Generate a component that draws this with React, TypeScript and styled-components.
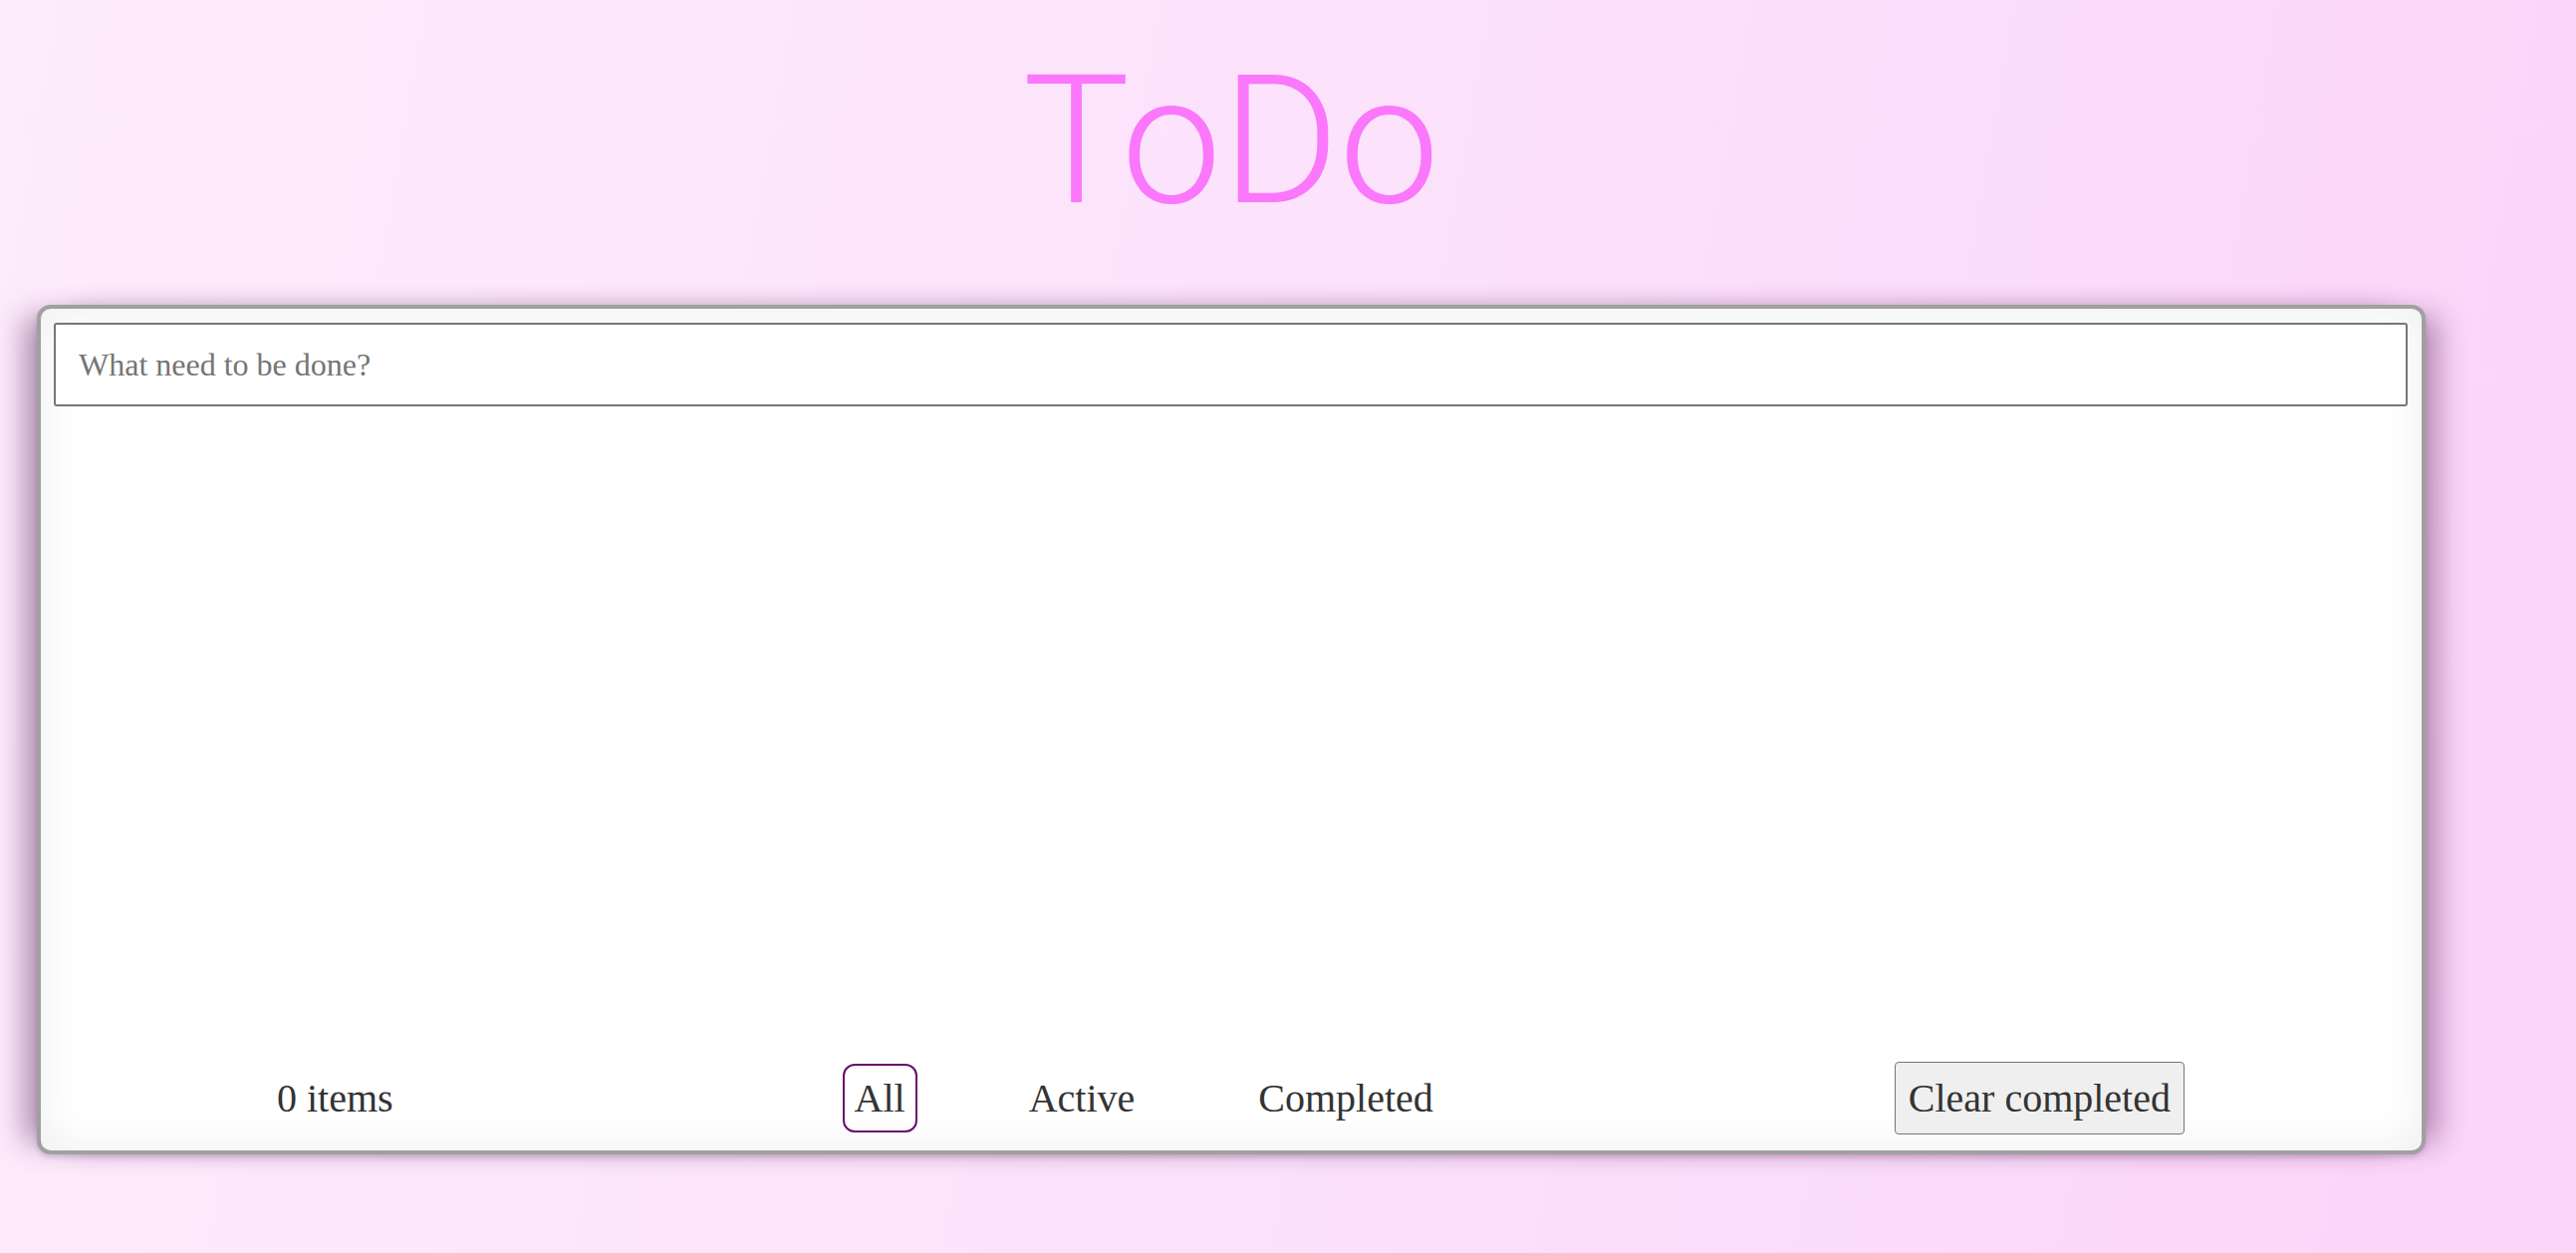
import React, { useState } from "react";
import styled, { createGlobalStyle } from "styled-components";

const GlobalStyle = createGlobalStyle`
  html, body {
    margin: 0;
    padding: 0;
  }
  body {
    min-height: 1258px;
    background: linear-gradient(100deg, #fdecfd 0%, #fce2fb 50%, #fbd4fa 100%);
    font-family: "Liberation Serif", "Times New Roman", serif;
  }
  * { box-sizing: border-box; }
`;

const Page = styled.div`
  padding-left: 37px;
  padding-bottom: 60px;
`;

const Main = styled.main`
  width: 2398px;
`;

const Title = styled.h1`
  margin: 52px 0 74px;
  text-align: center;
  font-family: Roboto, "Noto Sans", sans-serif;
  font-weight: 300;
  font-size: 180px;
  line-height: 180px;
  color: #fb77fb;
`;

const Card = styled.section`
  height: 853px;
  display: flex;
  flex-direction: column;
  padding: 14px 14px 16px 13px;
  background: #ffffff;
  border: 4px solid #a0a0a0;
  border-radius: 14px;
  box-shadow:
    inset 0 0 45px rgba(0, 0, 0, 0.07),
    -24px 0 30px -12px rgba(60, 0, 60, 0.42),
    24px 0 30px -12px rgba(60, 0, 60, 0.38),
    0 3px 5px rgba(60, 0, 60, 0.14);
`;

const NewTodo = styled.input`
  height: 84px;
  width: 100%;
  padding: 0 23px;
  border: 2px solid #777777;
  border-radius: 3px;
  background: #ffffff;
  font-family: "Liberation Serif", "Times New Roman", serif;
  font-size: 32px;
  color: #333333;
  outline: none;
  &::placeholder {
    color: #757575;
  }
`;

const List = styled.ul`
  flex: 1;
  margin: 0;
  padding: 0;
  list-style: none;
`;

const Footer = styled.footer`
  display: flex;
  align-items: center;
  justify-content: space-between;
  height: 73px;
  padding: 0 224px;
  color: #333333;
`;

const Count = styled.span`
  font-size: 40px;
  line-height: 46px;
`;

const Filters = styled.nav`
  display: flex;
  align-items: center;
  gap: 100px;
`;

const FilterLink = styled.a<{ $active?: boolean }>`
  display: inline-flex;
  align-items: center;
  justify-content: center;
  height: 69px;
  padding: 0 10px;
  border: 2px solid ${(p) => (p.$active ? "#6b0a6b" : "transparent")};
  border-radius: 12px;
  font-size: 40px;
  color: #333333;
  text-decoration: none;
  cursor: pointer;
`;

const ClearButton = styled.button`
  height: 73px;
  padding: 0 13px;
  border: 1.5px solid #767676;
  border-radius: 4px;
  background: #efefef;
  font-family: "Liberation Serif", "Times New Roman", serif;
  font-size: 40px;
  color: #333333;
  cursor: pointer;
`;

export default function App() {
  const [filter, setFilter] = useState("All");
  const filters = ["All", "Active", "Completed"];
  return (
    <>
      <GlobalStyle />
      <Page>
        <Main>
          <Title>ToDo</Title>
          <Card>
            <NewTodo placeholder="What need to be done?" />
            <List />
            <Footer>
              <Count>0 items</Count>
              <Filters>
                {filters.map((f) => (
                  <FilterLink key={f} $active={filter === f} onClick={() => setFilter(f)}>
                    {f}
                  </FilterLink>
                ))}
              </Filters>
              <ClearButton>Clear completed</ClearButton>
            </Footer>
          </Card>
        </Main>
      </Page>
    </>
  );
}
